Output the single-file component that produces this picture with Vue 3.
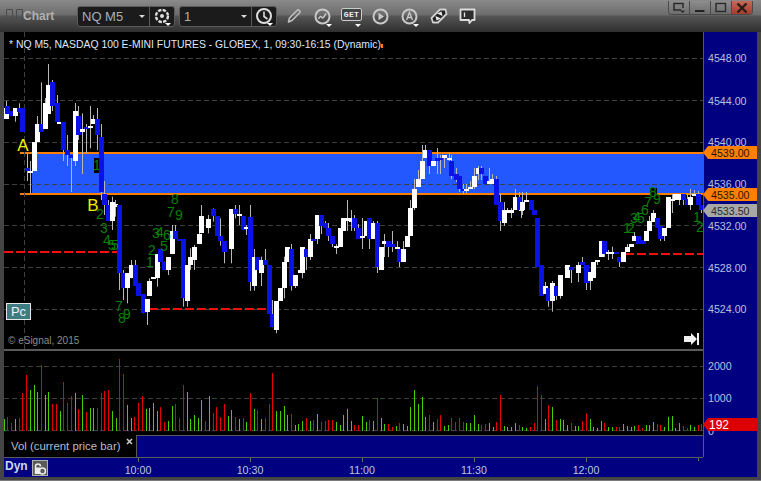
<script setup>
// Candles: [x, bodyTop, bodyBottom, wickTop, wickBottom, colour], read in 3x crops of the chart
const crops = [
  { ox: 0, oy: 60, rows: [
    [17,145,177,123,177,'w'],[22,138,162,138,162,'b'],[33,153,167,153,167,'b'],[45,144,168,144,185,'w'],
    [58,145,157,130,157,'b'],[67,145,216,145,216,'b'],[80,323,333,280,363,'b'],[91,333,339,303,400,'w'],
    [103,246,333,246,333,'w'],[112,192,246,168,246,'w'],[124,192,216,67,216,'b'],[136,129,207,114,207,'w'],
    [145,75,161,12,161,'w'],[157,66,138,60,153,'b'],[170,129,186,105,190,'b'],[178,186,192,186,192,'w'],
    [190,186,270,186,303,'b'],[202,270,285,225,318,'b'],[214,285,293,285,396,'b'],[226,153,303,129,318,'w'],
    [235,168,225,138,240,'b'],[247,207,216,160,342,'w'],[259,201,207,192,280,'b'],[271,198,204,138,265,'w'],
    [279,177,192,165,192,'w'],[292,177,225,144,270,'b'],[304,231,396,192,420,'b'],[313,402,435,363,465,'b'],
    [325,435,483,420,483,'b'],[337,426,483,410,510,'w'],[345,432,440,420,470,'w']
  ]},
  { ox: 0, oy: 225, rows: [
    [358,-60,143,-60,195,'b'],[369,143,189,135,225,'b'],[382,145,189,145,235,'w'],[393,120,160,105,160,'w'],
    [404,120,182,105,182,'b'],[415,175,212,175,212,'b'],[428,208,265,208,265,'b'],[440,222,260,222,300,'w'],
    [448,168,213,160,213,'w'],[459,156,162,156,162,'w'],[470,87,158,87,185,'w'],[481,72,110,72,110,'b'],
    [492,110,135,110,135,'b'],[505,96,135,96,150,'w'],[517,18,87,0,87,'w'],[526,18,42,0,42,'b'],
    [538,42,48,42,48,'b'],[550,42,220,42,245,'b'],[562,120,228,120,245,'w'],[570,96,120,70,135,'w'],
    [583,66,105,60,135,'w'],[596,26,57,10,57,'w'],[604,-27,25,-60,25,'w'],[625,-18,8,-30,25,'w'],
    [640,-48,-27,-50,-10,'b'],[650,-27,32,-27,32,'b'],[660,33,48,-20,62,'b'],[672,48,80,48,115,'b'],
    [693,-48,72,-48,115,'w'],[706,-48,-33,-60,-20,'b'],[717,-33,-27,-60,0,'w'],[730,-27,15,-27,15,'b'],
    [738,5,10,0,30,'w'],[750,-24,172,-60,198,'b']
  ]},
  { ox: 250, oy: 130, rows: [
    [13,381,468,357,482,'w'],[21,381,420,381,420,'b'],[34,390,429,380,468,'w'],[46,390,405,357,405,'b'],
    [58,405,552,405,552,'b'],[66,552,592,510,592,'b'],[79,513,600,513,610,'w'],[91,474,513,474,513,'w'],
    [103,396,474,380,505,'w'],[112,351,396,351,396,'w'],[124,357,468,342,482,'b'],[136,435,468,435,474,'w'],
    [150,420,429,420,429,'w'],[157,351,429,351,445,'w'],[168,357,381,357,420,'b'],[181,327,381,312,390,'w'],
    [190,327,333,327,333,'b'],[202,255,327,255,342,'w'],[214,255,288,255,312,'b'],[226,279,294,273,294,'b'],
    [235,294,318,279,333,'b'],[247,318,342,318,351,'b'],[259,348,354,342,372,'w'],[271,294,351,294,351,'w'],
    [280,264,303,264,303,'w'],[292,264,273,210,303,'w'],[304,264,276,240,303,'w'],[313,264,294,255,303,'b'],
    [325,294,327,282,327,'b'],[337,318,324,264,357,'w'],[347,273,318,273,318,'w'],[358,264,327,264,357,'b'],
    [370,279,327,273,327,'w'],[382,279,411,273,429,'b'],[394,351,420,351,420,'w'],[401,333,342,312,381,'w'],
    [415,333,351,333,381,'b'],[427,342,351,303,366,'b'],[440,351,357,333,365,'w'],[447,357,396,357,411,'b'],
    [460,357,396,333,396,'w'],[472,318,351,318,351,'w'],[481,234,318,210,318,'w'],[493,177,234,147,240,'w'],
    [505,147,171,120,171,'w'],[517,93,147,45,147,'w'],[525,60,84,45,84,'w'],[538,60,108,60,132,'b'],
    [550,93,108,93,108,'w'],[562,84,93,54,132,'b'],[570,84,90,75,132,'b'],[583,75,84,75,114,'w'],
    [596,84,90,69,100,'w'],[604,93,138,75,147,'b'],[617,132,150,114,156,'b'],[628,138,177,138,186,'b'],
    [640,177,183,162,192,'b'],[648,177,183,162,190,'w'],[660,171,177,153,177,'w'],[673,138,171,114,177,'w'],
    [684,114,132,108,150,'w'],[694,114,132,108,150,'b'],[706,138,162,138,162,'b'],[718,153,162,114,162,'w'],
    [727,147,162,132,162,'w'],[739,147,225,138,225,'b'],[751,216,273,192,303,'b'],[763,240,279,216,288,'w'],
    [772,240,249,234,249,'w'],[784,240,249,234,264,'w'],[795,201,240,177,240,'w'],[805,201,240,201,240,'b']
  ]},
  { ox: 510, oy: 130, rows: [
    [33,237,243,225,264,'w'],[15,201,240,180,240,'w'],[27,201,240,186,240,'b'],[37,216,240,186,255,'w'],
    [48,210,216,186,216,'w'],[62,210,240,210,240,'b'],[73,240,255,240,255,'b'],[82,264,411,264,411,'b'],
    [94,405,498,405,498,'b'],[106,468,492,456,492,'w'],[113,474,513,474,530,'b'],[126,459,513,453,545,'w'],
    [138,468,498,468,510,'b'],[151,435,498,435,506,'w'],[171,405,444,405,444,'w'],[184,411,420,411,459,'b'],
    [205,405,429,396,456,'w'],[217,396,405,381,405,'b'],[229,405,459,405,480,'b'],[241,426,453,426,480,'w'],
    [250,396,444,396,444,'w'],[262,390,396,390,405,'w'],[272,333,381,333,381,'w'],[283,333,372,333,381,'b'],
    [295,366,372,360,390,'w'],[306,366,372,350,387,'w'],[318,366,372,366,372,'b'],[327,381,396,381,411,'b'],
    [340,366,396,366,396,'w'],[352,351,366,342,366,'w'],[364,342,351,342,351,'w'],[372,318,333,306,333,'w'],
    [385,318,342,318,342,'b'],[398,330,342,330,342,'b'],[409,303,333,303,333,'w'],[418,273,303,258,303,'w'],
    [430,249,276,240,276,'w'],[442,264,294,264,294,'b'],[451,288,327,288,333,'b'],[463,294,318,294,333,'w'],
    [475,201,294,201,294,'w'],[487,207,213,192,249,'w'],[495,192,210,192,210,'w'],[507,192,210,192,225,'w'],
    [519,192,210,192,225,'b'],[530,207,225,192,225,'b'],[541,201,225,177,240,'w'],[553,192,198,180,198,'w'],
    [565,192,225,183,225,'b'],[574,225,240,225,249,'b']
  ]}
]

const candles = crops.flatMap(({ ox, oy, rows }) =>
  rows.map(([x, top, bottom, wickTop, wickBottom, colour]) => {
    const cx = Math.round(ox + x / 3)
    const y = oy + top / 3
    return {
      wickX: cx + 0.5,
      wickTop: oy + wickTop / 3,
      wickBottom: oy + wickBottom / 3,
      x: cx - 2,
      y,
      h: Math.max(2, (bottom - top) / 3),
      colour: colour === 'w' ? '#ffffff' : '#0a12e6'
    }
  })
)

const volCrops = [
  { ox: 0, rows: '13,222,g 22,216,r 34,234,r 46,222,g 58,219,r 67,144,r 79,90,r 91,135,g 103,120,g 112,141,g 124,60,r 136,150,g 145,141,g 157,177,r 169,177,r 181,198,g 190,111,r 202,174,r 214,153,r 226,144,g 235,192,r 247,150,g 259,201,r 271,189,g 280,189,g 292,189,r 304,144,r 313,138,r 325,135,r 337,198,g 349,219,g 358,42,r 370,87,r 382,180,g 394,219,g 403,216,r 415,174,r 427,153,r 439,192,g 448,189,g 460,174,g 472,198,g 481,186,r 493,231,r 505,228,g 517,183,g 526,177,r 538,219,r 550,120,r 562,141,g 571,222,g 583,210,g 595,219,g 604,165,g 616,228,r 628,153,g 640,204,r 649,186,r 661,216,r 673,177,r 685,213,g 694,195,g 706,216,r 718,222,g 730,219,r 739,231,g 751,144,r 763,192,g 772,195,r' },
  { ox: 260, rows: '4,222,g 16,219,r 28,177,r 37,84,r 49,198,g 61,198,g 73,183,g 82,210,g 94,207,r 106,240,g 115,237,g 127,228,g 139,219,r 151,228,g 160,225,r 172,207,g 184,231,r 196,228,r 205,225,r 217,225,r 229,231,g 241,240,g 250,210,g 262,192,g 274,228,g 283,240,r 295,240,r 307,213,g 319,231,g 328,225,r 340,228,g 352,159,r 364,219,g 373,237,g 385,237,r 397,246,r 409,243,g 418,234,r 430,237,g 442,243,g 451,186,g 463,135,g 475,177,g 487,156,g 496,216,g 508,210,r 520,231,g 532,222,r 541,210,r 553,243,g 565,240,g 574,219,r 586,231,r 598,219,r 610,231,r 619,234,g 631,234,g 643,210,g 655,237,g 664,240,r 676,237,r 688,234,g 700,246,g 709,231,r 721,150,r 733,243,g 742,246,g' },
  { ox: 510, rows: '4,246,g 16,234,g 28,240,r 37,246,g 49,249,g 61,246,r 73,234,r 82,123,r 94,150,r 106,222,g 115,180,r 127,186,g 139,225,r 151,222,g 160,225,g 172,240,g 184,234,r 196,243,g 205,243,g 217,228,r 229,204,r 241,222,g 250,246,g 262,249,g 274,228,g 283,234,r 295,246,g 307,246,g 319,246,r 328,246,r 340,237,g 352,243,g 364,246,g 373,243,g 385,240,r 397,249,r 409,240,g 418,240,g 430,231,g 442,237,r 451,240,r 463,246,g 475,216,g 487,213,g 496,249,g 508,234,g 520,243,r 532,249,r 541,240,g 553,246,g 565,240,r 574,237,r' }
]

const volumes = volCrops.flatMap(({ ox, rows }) =>
  rows.split(' ').map((item) => {
    const [x, top, c] = item.split(',')
    const y = 345 + Number(top) / 3
    return { x: Math.floor(ox + Number(x) / 3), y, h: 431 - y, colour: c === 'g' ? '#46cf00' : '#e60000' }
  })
)

const gridYs = [58.5, 100.5, 142.5, 184.5, 225.5, 267.5, 309.5]
const priceLabels = [
  { y: 58, t: '4548.00' }, { y: 101, t: '4544.00' }, { y: 142, t: '4540.00' }, { y: 184, t: '4536.00' },
  { y: 226, t: '4532.00' }, { y: 268, t: '4528.00' }, { y: 309, t: '4524.00' },
  { y: 366, t: '2000' }, { y: 398, t: '1000' }, { y: 431, t: '0' }
]
const tags = [
  { y: 146, h: 13, fill: '#ff8000', ink: '#2a1400', t: '4539.00', big: false },
  { y: 188, h: 13, fill: '#ff8000', ink: '#2a1400', t: '4535.00', big: false },
  { y: 204, h: 13, fill: '#a8a8a8', ink: '#2a2a2a', t: '4533.50', big: false },
  { y: 418, h: 13, fill: '#dc0000', ink: '#ffffff', t: '192', big: true }
]
const redLines = [
  { x1: 4, x2: 124, y: 252 }, { x1: 149, x2: 273, y: 309 }, { x1: 625, x2: 703, y: 254 }
]
const digits = [
  [175,204,'8'],[171,217,'7'],[179,220,'9'],[100,219,'2'],[104,233,'3'],[107,245,'4'],[112,250,'5'],[115,250,'5'],
  [119,311,'7'],[122,323,'8'],[127,319,'9'],[150,267,'1'],[152,255,'2'],[164,251,'5'],[156,238,'3'],[160,237,'4'],
  [167,240,'6'],[653,197,'8'],[648,207,'7'],[657,204,'9'],[645,215,'6'],[634,223,'3'],[637,222,'4'],[641,223,'5'],
  [627,233,'1'],[631,233,'2'],[697,222,'1'],[700,232,'2']
].map(([x, y, t]) => ({ x, y, t }))
const times = [
  { x: 138, t: '10:00' }, { x: 250, t: '10:30' }, { x: 362, t: '11:00' }, { x: 474, t: '11:30' }, { x: 586, t: '12:00' }
]
</script>

<template>
  <div class="window">
    <header class="toolbar">
      <span class="grip"><i></i><i></i></span>
      <span class="title">Chart</span>
      <div class="combo first">
        <span class="value">NQ M5</span><span class="caret"></span>
        <span class="combo-btn">
          <svg width="18" height="18" viewBox="0 0 18 18">
            <circle cx="9" cy="9" r="6" fill="none" stroke="#ddd" stroke-width="2.4" stroke-dasharray="3.4 1.3" />
            <circle cx="9" cy="9" r="2" fill="#ddd" />
          </svg>
          <span class="mini"></span>
        </span>
      </div>
      <div class="combo second">
        <span class="value">1</span><span class="caret"></span>
        <span class="combo-btn">
          <svg width="18" height="18" viewBox="0 0 18 18">
            <circle cx="9" cy="9" r="7" fill="none" stroke="#ddd" stroke-width="2" />
            <path d="M9 4.5V9.5L12.5 12" fill="none" stroke="#ddd" stroke-width="1.6" />
          </svg>
          <span class="mini"></span>
        </span>
      </div>
      <div class="tools">
        <span class="tool">
          <svg width="16" height="16" viewBox="0 0 16 16"><path d="M2.5 14L3.5 10 11 2.5a1.6 1.6 0 0 1 2.5 2.5L6 12.5z" fill="none" stroke="#bdbdbd" stroke-width="1.6" stroke-linejoin="round" /></svg>
        </span>
        <span class="tool">
          <svg width="17" height="17" viewBox="0 0 17 17"><circle cx="8.5" cy="8.5" r="7" fill="none" stroke="#c8c8c8" stroke-width="2" /><path d="M4.5 11C6 8 7 8 8 9.5S10.500 8 12 5.500" fill="none" stroke="#c8c8c8" stroke-width="1.5" /></svg>
          <span class="mini"></span>
        </span>
        <span class="tool">
          <span class="get">GET</span>
          <span class="mini"></span>
        </span>
        <span class="tool">
          <svg width="17" height="17" viewBox="0 0 17 17"><circle cx="8.500" cy="8.500" r="7" fill="none" stroke="#c8c8c8" stroke-width="2" /><path d="M6.500 4.800V12.200L12 8.500z" fill="#c8c8c8" /></svg>
        </span>
        <span class="tool">
          <svg width="17" height="17" viewBox="0 0 17 17"><circle cx="8.500" cy="8.500" r="7" fill="none" stroke="#c8c8c8" stroke-width="2" /><path d="M5.500 12L8.500 4.500 11.500 12M6.600 9.500H10.400" fill="none" stroke="#c8c8c8" stroke-width="1.400" /></svg>
          <span class="mini"></span>
        </span>
        <span class="tool">
          <svg width="18" height="16" viewBox="0 0 18 16"><path d="M1.500 10L10 1.500H15.500L16.500 6 8 14.500H3z" fill="#222" stroke="#d0d0d0" stroke-width="1.800" stroke-linejoin="round" /><path d="M7 5.500L11.500 3.500 12.500 8M5.500 8L6.500 12.500 11 10.500" fill="#e8e8e8" /></svg>
        </span>
        <span class="tool">
          <svg width="17" height="17" viewBox="0 0 17 17"><path d="M1.500 1.500H15.500V12H13L10.500 15 10 12H1.500z" fill="#2d2d2d" stroke="#dcdcdc" stroke-width="1.800" stroke-linejoin="round" /><path d="M5.500 4.500V9" stroke="#e8e8e8" stroke-width="1.300" /></svg>
        </span>
      </div>
      <div class="win-btns">
        <span class="win-btn">
          <svg width="14" height="12" viewBox="0 0 14 12"><path d="M9 8H2V1.500H11V6" fill="none" stroke="#2a2a2a" stroke-width="1.500" /><path d="M8 8.500H13L10.500 11z" fill="#2a2a2a" /></svg>
        </span>
        <span class="win-btn">
          <svg width="14" height="12" viewBox="0 0 14 12"><path d="M2 9H11.500" stroke="#222" stroke-width="2" /></svg>
        </span>
        <span class="win-btn">
          <svg width="14" height="12" viewBox="0 0 14 12"><rect x="2" y="1.500" width="9.500" height="8" fill="none" stroke="#2a2a2a" stroke-width="1.400" /></svg>
        </span>
        <span class="win-btn close">
          <svg width="14" height="12" viewBox="0 0 14 12"><path d="M2.500 1.500L11.500 10.500M11.500 1.500L2.500 10.500" stroke="#2a1a18" stroke-width="2.400" /></svg>
        </span>
      </div>
    </header>

    <div class="body">
      <div class="plots">
        <section class="price">
          <svg class="canvas" width="699" height="317" viewBox="4 32 699 317">
            <rect x="32" y="154" width="671" height="39" fill="#2458ff" />
            <rect x="20" y="152" width="683" height="2" fill="#ff7f00" />
            <rect x="20" y="193" width="683" height="2" fill="#ff7f00" />
            <line v-for="y in gridYs" :key="y" x1="4" x2="703" :y1="y" :y2="y" class="grid" />
            <line x1="24.500" x2="24.500" y1="32" y2="349" class="grid" />
            <rect x="94" y="158" width="6" height="15" fill="#000" />
            <rect x="650" y="188" width="7" height="7" fill="#000" />
            <line v-for="l in redLines" :key="l.x1" :x1="l.x1" :x2="l.x2" :y1="l.y" :y2="l.y" class="red" />
            <line v-for="(c, i) in candles" :key="'w' + i" :x1="c.wickX" :x2="c.wickX" :y1="c.wickTop" :y2="c.wickBottom" class="wick" />
            <text x="97" y="170" class="digit">1</text>
            <rect v-for="(c, i) in candles" :key="'b' + i" :x="c.x" :y="c.y" width="5" :height="c.h" :fill="c.colour" shape-rendering="crispEdges" />
            <text v-for="(d, i) in digits" :key="'d' + i" :x="d.x" :y="d.y" class="digit">{{ d.t }}</text>
            <text x="23" y="151" class="mark">A</text>
            <text x="93" y="211" class="mark">B</text>
            <path d="M684 336H691V333L697 339 691 345V342H684z" fill="#f0f0f0" />
            <rect x="697" y="333" width="2" height="12" fill="#f0f0f0" />
          </svg>
          <p class="caption">* NQ M5, NASDAQ 100 E-MINI FUTURES - GLOBEX, 1, 09:30-16:15 (Dynamic)<i class="flag"></i></p>
          <span class="pc">Pc</span>
          <span class="copyright">© eSignal, 2015</span>
        </section>
        <section class="volume">
          <svg class="canvas" width="699" height="84" viewBox="4 351 699 84">
            <line x1="4" x2="703" y1="366.500" y2="366.500" class="grid" />
            <line x1="4" x2="703" y1="398.500" y2="398.500" class="grid" />
            <line x1="4" x2="703" y1="430.500" y2="430.500" class="grid" />
            <rect v-for="(v, i) in volumes" :key="i" :x="v.x" :y="v.y" width="1" :height="v.h" :fill="v.colour" shape-rendering="crispEdges" />
          </svg>
        </section>
        <div class="legend">
          <div class="legend-tab">
            <span>Vol (current price bar)</span>
            <svg class="close-x" width="7" height="7" viewBox="0 0 7 7"><path d="M1 1L6 6M6 1L1 6" stroke="#ccc" stroke-width="1.600" /></svg>
          </div>
          <div class="legend-rest"></div>
        </div>
        <footer class="timebar">
          <span class="dyn">Dyn</span>
          <span class="lock">
            <svg width="14" height="14" viewBox="0 0 14 14"><path d="M2.500 13V5.500a2.500 2.500 0 0 1 5 0" fill="none" stroke="#ececec" stroke-width="1.500" /><rect x="2" y="6.500" width="5" height="6.500" fill="#ececec" /><circle cx="9.500" cy="10" r="3" fill="none" stroke="#ececec" stroke-width="1.500" /></svg>
          </span>
          <svg class="times" width="699" height="20" viewBox="4 457 699 20">
            <g v-for="t in times" :key="t.t">
              <line :x1="t.x + 0.500" :x2="t.x + 0.500" y1="457" y2="461" stroke="#6a6a6a" />
              <text :x="t.x" y="473" class="time">{{ t.t }}</text>
            </g>
            <line x1="698.500" x2="698.500" y1="457" y2="460" stroke="#6a6a6a" />
          </svg>
        </footer>
      </div>
      <aside class="axis">
        <svg width="54" height="425" viewBox="703 32 54 425" class="axis-svg">
          <line x1="703.500" x2="703.500" y1="32" y2="458" stroke="#5a5a5a" />
          <text v-for="p in priceLabels" :key="p.t" x="708" :y="p.y + 4" class="tick">{{ p.t }}</text>
          <g v-for="t in tags" :key="t.t">
            <path :d="`M703 ${t.y + t.h / 2}L708 ${t.y}H757V${t.y + t.h}H708z`" :fill="t.fill" />
            <text :x="t.big ? 709 : 711" :y="t.y + 10.500" :class="t.big ? 'tag big' : 'tag'" :fill="t.ink">{{ t.t }}</text>
          </g>
        </svg>
      </aside>
    </div>
  </div>
</template>

<style scoped>
.window {
  width: 761px;
  height: 481px;
  display: flex;
  flex-direction: column;
  background: #444;
  border-bottom: 1px solid #7a7a7a;
  box-sizing: border-box;
  font-family: "Liberation Sans", Arial, sans-serif;
  overflow: hidden;
}
.toolbar {
  height: 32px;
  flex: none;
  display: flex;
  align-items: center;
  position: relative;
  padding-left: 6px;
  box-sizing: border-box;
  background: linear-gradient(#8a8a8a 0, #6c6c6c 15px, #555 16px, #2f2f2f 32px);
}
.grip { display: flex; gap: 3px; }
.grip i {
  width: 5px;
  height: 12px;
  border: 1px solid #4a4a4a;
  border-radius: 1px;
}
.title {
  width: 54px;
  font-size: 12px;
  font-weight: 700;
  color: #b0b0b0;
}
.combo {
  height: 21px;
  display: flex;
  align-items: center;
  background: #1b1b1b;
  border: 1px solid #5a5a5a;
  border-radius: 3px;
  box-sizing: border-box;
  margin-right: 4px;
  position: relative;
}
.combo.first { width: 98px; }
.combo.second { width: 98px; }
.value {
  flex: 1;
  padding-left: 4px;
  font-size: 13px;
  color: #a8b0b8;
}
.caret {
  width: 0;
  height: 0;
  margin-right: 4px;
  border: 3px solid transparent;
  border-top: 3px solid #d8d8d8;
  border-bottom: 0;
}
.combo-btn {
  width: 25px;
  height: 100%;
  flex: none;
  display: flex;
  align-items: center;
  justify-content: center;
  border-left: 1px solid #5a5a5a;
  position: relative;
  box-sizing: border-box;
}
.mini {
  position: absolute;
  right: 3px;
  bottom: 0;
  width: 0;
  height: 0;
  border: 3px solid transparent;
  border-top: 3px solid #fff;
  border-bottom: 0;
}
.tools {
  display: flex;
  align-items: center;
  margin-left: -2px;
}
.tool {
  width: 29px;
  height: 20px;
  display: flex;
  align-items: center;
  justify-content: center;
  position: relative;
}
.tool .mini { right: 5px; bottom: -1px; }
.get {
  padding: 0 2px;
  height: 11px;
  font-size: 8px;
  line-height: 11px;
  font-weight: 700;
  letter-spacing: 0.3px;
  color: #eee;
  background: #444;
  border: 1px solid #ccc;
  border-radius: 2px;
  margin-top: -3px;
  font-family: "Liberation Mono", monospace;
}
.win-btns {
  position: absolute;
  top: 1px;
  right: 8px;
  display: flex;
  height: 13px;
  border: 1px solid #4a4a4a;
  border-top: 0;
  border-radius: 0 0 4px 4px;
  overflow: hidden;
}
.win-btn {
  width: 20px;
  display: flex;
  align-items: center;
  justify-content: center;
  border-left: 1px solid #4a4a4a;
  background: linear-gradient(#8d8d8d, #6d6d6d);
}
.win-btn:first-child { border-left: 0; }
.win-btn.close { background: linear-gradient(#c46a58, #a63c2c); }
.body {
  flex: 1;
  display: flex;
  margin: 0 4px 3px;
  min-height: 0;
}
.plots {
  width: 699px;
  display: flex;
  flex-direction: column;
  flex: none;
}
.price {
  height: 317px;
  position: relative;
  background: #000;
  border-bottom: 2px solid #5a5a5a;
  flex: none;
}
.canvas { display: block; }
.caption {
  position: absolute;
  left: 5px;
  top: 6px;
  margin: 0;
  font-size: 10.4px;
  line-height: 13px;
  color: #dfe8ff;
  white-space: nowrap;
}
.flag {
  display: inline-block;
  width: 2px;
  height: 4px;
  background: #ff7f00;
}
.pc {
  position: absolute;
  left: 2px;
  top: 271px;
  width: 25px;
  height: 17px;
  box-sizing: border-box;
  border: 1px solid #e8e8e8;
  background: #3f7c80;
  color: #eef;
  font-size: 13px;
  line-height: 15px;
  text-align: center;
}
.copyright {
  position: absolute;
  left: 4px;
  top: 303px;
  font-size: 10px;
  line-height: 12px;
  color: #8c8c8c;
}
.volume {
  height: 84px;
  background: #000;
  flex: none;
}
.legend {
  height: 22px;
  display: flex;
  flex: none;
  border-bottom: 1px solid #5a5a5a;
}
.legend-tab {
  width: 132px;
  background: #000;
  color: #b4bcd0;
  font-size: 11.4px;
  line-height: 22px;
  padding-left: 7px;
  box-sizing: border-box;
  position: relative;
  white-space: nowrap;
}
.close-x {
  position: absolute;
  right: 3px;
  top: 3px;
}
.legend-rest {
  flex: 1;
  background: #000080;
  border-top: 1px solid #5a5a5a;
  border-left: 1px solid #5a5a5a;
}
.timebar {
  flex: 1;
  background: #000080;
  position: relative;
  display: flex;
  align-items: center;
  padding-left: 1px;
}
.dyn {
  font-size: 12px;
  font-weight: 700;
  color: #cdd6f0;
  margin-top: -3px;
}
.lock {
  width: 16px;
  height: 16px;
  box-sizing: border-box;
  margin-left: 4px;
  display: flex;
  align-items: center;
  justify-content: center;
  background: #5a5a5a;
  border: 1px solid #b0b0b0;
}
.times {
  position: absolute;
  left: 0;
  top: 0;
}
.axis {
  width: 54px;
  flex: none;
  background: #000080;
}
.axis-svg { display: block; }
.grid {
  stroke: #3f3f3f;
  stroke-width: 1;
  stroke-dasharray: 5 3;
}
.red {
  stroke: #ef1010;
  stroke-width: 2;
  stroke-dasharray: 9 3;
}
.wick {
  stroke: #b8b8b8;
  stroke-width: 1;
}
.digit {
  font-size: 14px;
  fill: #0a7f0a;
  text-anchor: middle;
}
.mark {
  font-size: 17px;
  fill: #eeee00;
  text-anchor: middle;
}
.tick {
  font-size: 10.67px;
  fill: #b8c2dc;
}
.tag { font-size: 10.67px; }
.tag.big { font-size: 12px; }
.time {
  font-size: 10.67px;
  fill: #b8c8e4;
  text-anchor: middle;
}
</style>

<style>
html, body { margin: 0; background: #444; }
</style>
